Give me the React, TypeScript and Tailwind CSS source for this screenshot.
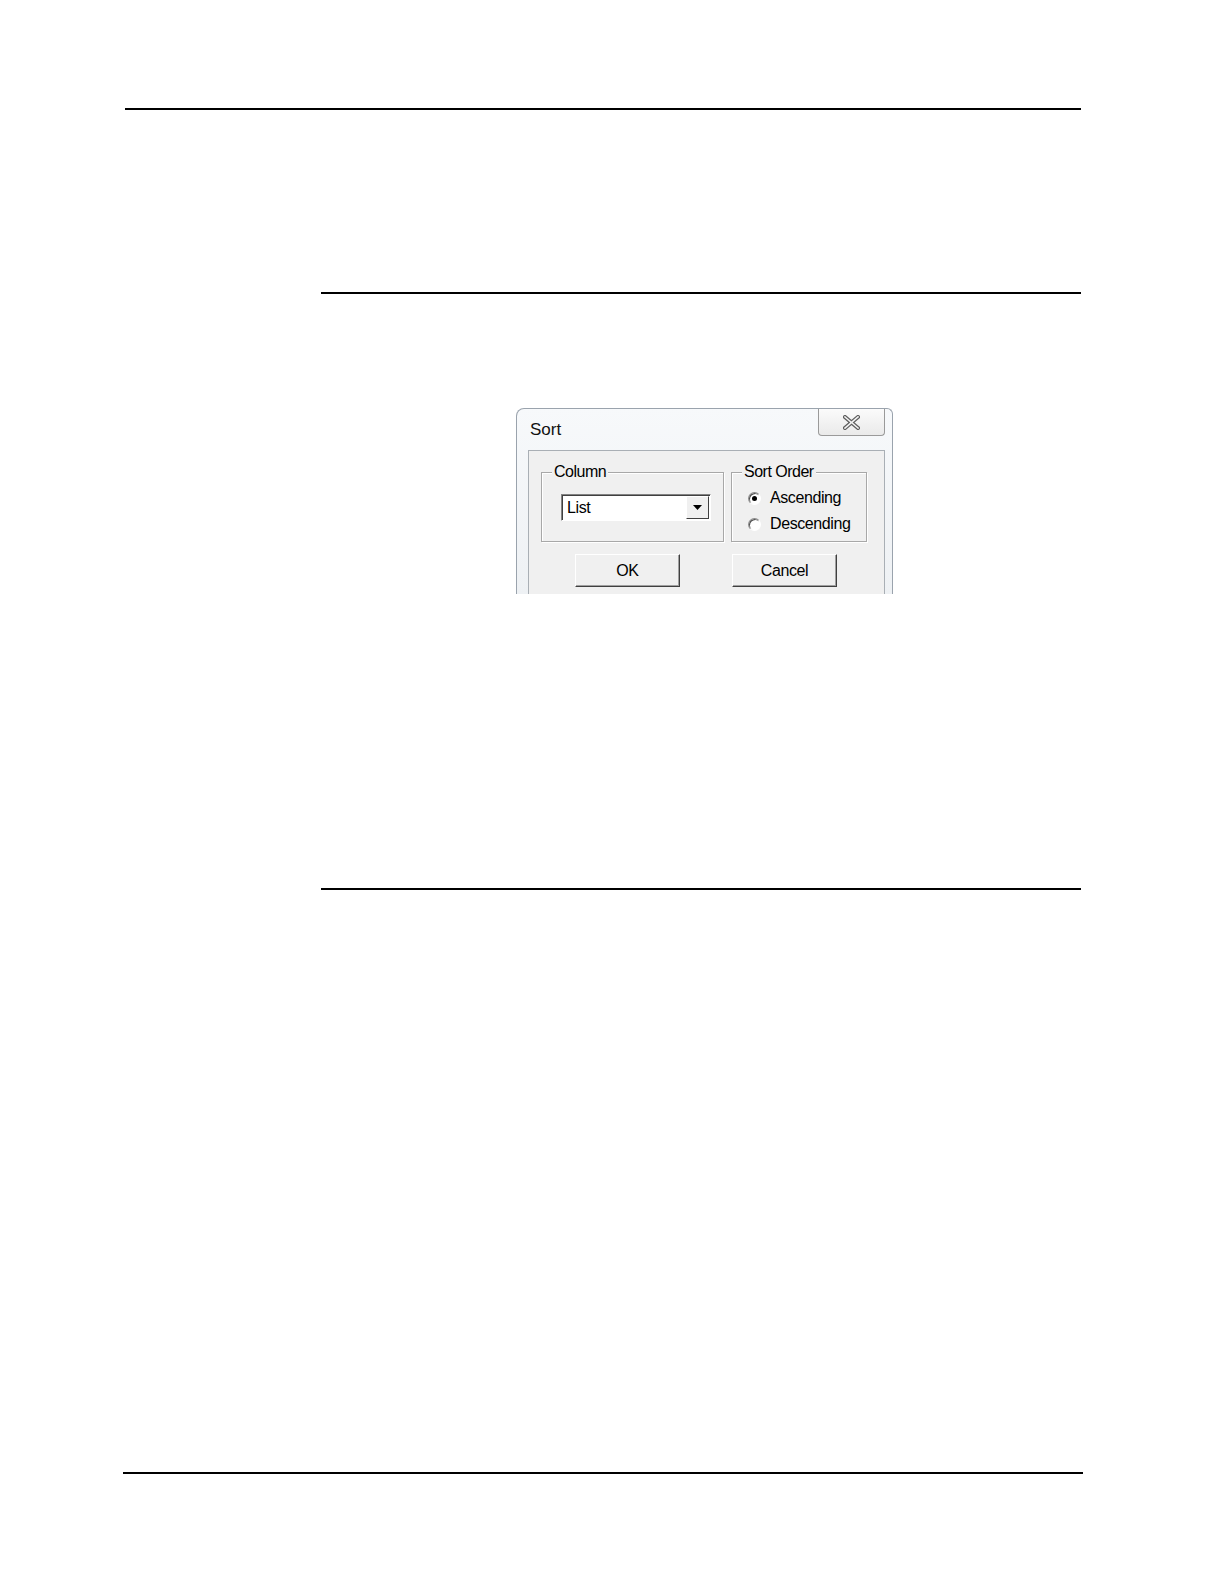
import React from 'react';

const font = { fontFamily: '"Liberation Sans", Arial, sans-serif' };

const GroupBox: React.FC<{ label: string; className: string; children: React.ReactNode }> = ({ label, className, children }) => (
  <div className={`relative border border-[#a8a8a8] shadow-[inset_1px_1px_0_#ffffff,1px_1px_0_#ffffff] ${className}`}>
    <span className="absolute -top-[11px] left-[10px] bg-[#f0f0f0] px-[2px] text-[16px] tracking-[-0.5px] leading-[20px] text-black">
      {label}
    </span>
    {children}
  </div>
);

const Radio: React.FC<{ checked?: boolean; label: string }> = ({ checked, label }) => (
  <div className="flex items-center h-[26px]">
    <div className="w-[13px] h-[13px] rounded-full border border-[#8a8a8a] border-b-white border-r-white bg-white shadow-[inset_1px_1px_0_#505050] flex items-center justify-center">
      {checked && <div className="w-[5px] h-[5px] rounded-full bg-black" />}
    </div>
    <span className="ml-[9px] text-[16px] tracking-[-0.4px] text-black leading-none">{label}</span>
  </div>
);

const Button: React.FC<{ label: string }> = ({ label }) => (
  <div className="w-[105px] h-[33px] flex items-center justify-center bg-[#f0f0f0] border border-t-white border-l-white border-r-[#404040] border-b-[#404040] shadow-[inset_-1px_-1px_0_#a0a0a0] text-[16px] tracking-[-0.4px] text-black">
    {label}
  </div>
);

function SortDialog() {
  return (
    <div className="ml-[516px] w-[377px] h-[186px] overflow-hidden" style={font}>
      <div className="h-full rounded-tl-[8px] rounded-tr-[6px] border-l border-t border-r border-[#9aa3ad] bg-gradient-to-b from-[#f7f9fb] to-[#eef1f4] flex flex-col">
        {/* title bar */}
        <div className="h-[41px] flex items-start justify-between pr-[7px]">
          <span className="mt-[11px] ml-[13px] text-[17px] text-[#111] leading-[20px]">Sort</span>
          <div className="w-[67px] h-[27px] border border-t-0 border-[#9a9a9a] rounded-b-[4px] bg-gradient-to-b from-[#fbfbfb] to-[#eaeaea] flex items-center justify-center">
            <svg width="17" height="15" viewBox="0 0 17 15">
              <path d="M2 2 L15 13 M15 2 L2 13" stroke="#5e5e5e" strokeWidth="4" strokeLinecap="square" />
              <path d="M2 2 L15 13 M15 2 L2 13" stroke="#f2f2f2" strokeWidth="1.6" strokeLinecap="square" />
            </svg>
          </div>
        </div>
        {/* client area */}
        <div className="ml-[11px] mr-[7px] flex-1 border border-b-0 border-[#a9afb5] bg-[#f0f0f0] pl-[12px] pt-[21px]">
          <div className="flex gap-[7px]">
            <GroupBox label="Column" className="w-[183px] h-[70px] pt-[21px] pl-[19px]">
              <div className="w-[150px] h-[27px] flex border border-t-[#828282] border-l-[#828282] border-r-white border-b-white bg-white shadow-[inset_1px_1px_0_#404040]">
                <span className="flex-1 pl-[5px] pt-[3px] text-[16px] tracking-[-0.4px] text-black leading-[20px]">List</span>
                <div className="w-[23px] my-[1px] mr-[1px] bg-[#f0f0f0] border border-t-white border-l-white border-r-[#404040] border-b-[#404040] flex items-center justify-center">
                  <svg width="9" height="5" viewBox="0 0 9 5">
                    <path d="M0 0 H9 L4.5 5 Z" fill="#000" />
                  </svg>
                </div>
              </div>
            </GroupBox>
            <GroupBox label="Sort Order" className="w-[136px] h-[70px] pt-[12px] pl-[16px]">
              <Radio checked label="Ascending" />
              <Radio label="Descending" />
            </GroupBox>
          </div>
          <div className="flex mt-[12px] ml-[34px] gap-[52px]">
            <Button label="OK" />
            <Button label="Cancel" />
          </div>
        </div>
      </div>
    </div>
  );
}

export default function App() {
  return (
    <div className="w-[1224px] h-[1584px] bg-white overflow-hidden">
      <div className="pt-[108px] pl-[125px] pr-[143px]">
        <div className="h-[2px] bg-black" />
      </div>
      <div className="mt-[182px] pl-[321px] pr-[143px]">
        <div className="h-[2px] bg-black" />
      </div>
      <div className="mt-[114px]">
        <SortDialog />
      </div>
      <div className="mt-[294px] pl-[321px] pr-[143px]">
        <div className="h-[2px] bg-black" />
      </div>
      <div className="mt-[582px] pl-[123px] pr-[141px]">
        <div className="h-[2px] bg-black" />
      </div>
    </div>
  );
}
